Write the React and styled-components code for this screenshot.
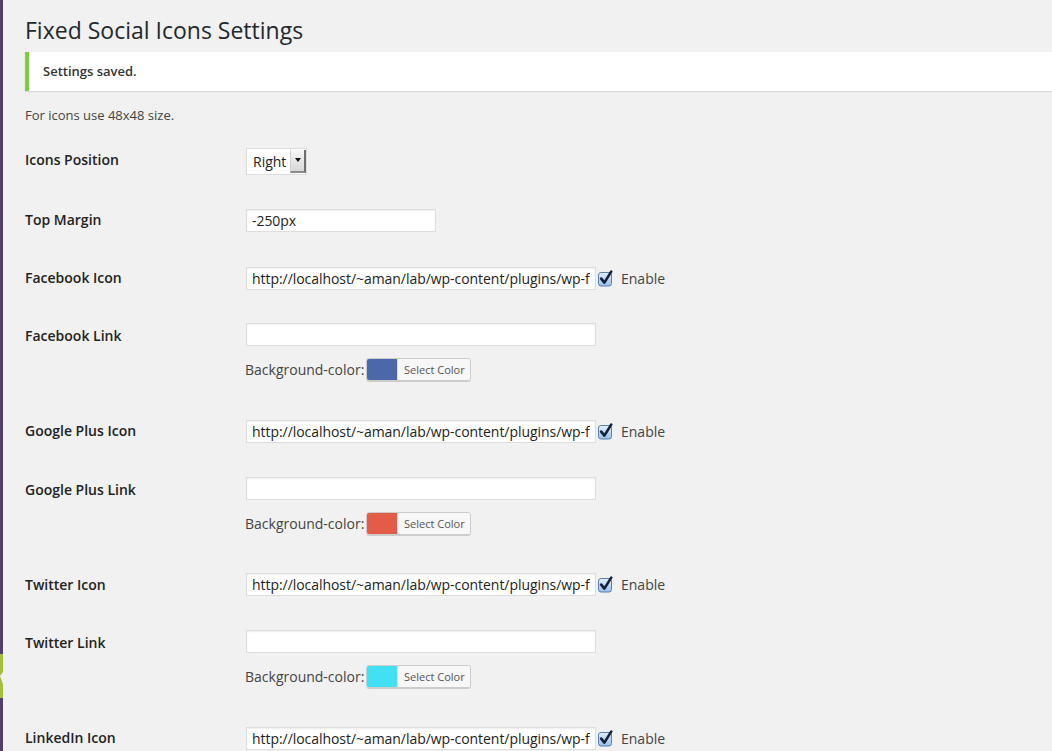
import React from "react";
import styled, { createGlobalStyle } from "styled-components";

const Global = createGlobalStyle`
  html, body { margin: 0; padding: 0; background: #f1f1f1; }
  body { font-family: "Open Sans", "Liberation Sans", sans-serif; color: #444; font-size: 13px; overflow: hidden; }
  * { box-sizing: border-box; }
`;

const Page = styled.div`
  display: flex;
  width: 1052px;
  height: 751px;
  overflow: hidden;
  background: #f1f1f1;
`;

const MenuStrip = styled.div`
  position: relative;
  width: 3px;
  flex: 0 0 3px;
  background: #523f6d;
`;

const CurrentMarker = styled.svg`
  position: absolute;
  left: 0;
  top: 654px;
`;

const Main = styled.div`
  flex: 1;
  padding: 16px 0 0 22px;
  min-width: 0;
`;

const Title = styled.h1`
  margin: 0;
  font-size: 23px;
  line-height: 29px;
  font-weight: 400;
  color: #23282d;
`;

const Notice = styled.div`
  margin-top: 7px;
  background: #fff;
  border-left: 4px solid #7ad03a;
  box-shadow: 0 1px 1px rgba(0, 0, 0, 0.1);
  padding: 10px 14px;
  font-size: 13px;
  line-height: 19px;
  font-weight: 600;
  color: #333;
`;

const Intro = styled.p`
  margin: 15px 0 6px;
  font-size: 13px;
  line-height: 19px;
  color: #444;
`;

const Row = styled.div`
  display: grid;
  grid-template-columns: 221px 1fr;
  height: ${(p) => p.$h}px;
`;

const Label = styled.div`
  padding-top: ${(p) => p.$top}px;
  font-size: 14px;
  line-height: 18px;
  font-weight: 600;
  color: #222;
`;

const Field = styled.div`
  display: flex;
  flex-direction: column;
  justify-content: ${(p) => (p.$center ? "center" : "flex-start")};
  padding-top: ${(p) => p.$top || 0}px;
  gap: 12px;
`;

const Line = styled.div`
  display: flex;
  align-items: center;
`;

const TextInput = styled.input`
  width: ${(p) => p.$w}px;
  height: 23px;
  border: 1px solid #ddd;
  box-shadow: inset 0 1px 2px rgba(0, 0, 0, 0.07);
  background: #fff;
  padding: 0 5px;
  margin: 0;
  font-family: "Open Sans", "Liberation Sans", sans-serif;
  font-size: 14px;
  letter-spacing: -0.05px;
  color: #222;
  outline: none;
`;

const SelectBox = styled.div`
  display: flex;
  align-items: stretch;
  width: 61px;
  height: 27px;
  border: 1px solid #ddd;
  background: #fff;
`;

const SelectValue = styled.span`
  flex: 1;
  padding-left: 6px;
  font-size: 14px;
  line-height: 25px;
  color: #222;
`;

const SelectArrow = styled.span`
  width: 16px;
  margin: 1px 0;
  background: linear-gradient(#f6f6f6, #d8d8d8);
  border-left: 1px solid #cfcfcf;
  border-right: 2px solid #6f6f6f;
  border-bottom: 2px solid #8a8a8a;
  display: flex;
  align-items: center;
  justify-content: center;
  &::after {
    content: "";
    border-left: 3px solid transparent;
    border-right: 3px solid transparent;
    border-top: 4px solid #111;
  }
`;

const Check = styled.span`
  display: inline-flex;
  width: 17px;
  height: 17px;
  margin-left: 2px;
`;

const CheckLabel = styled.span`
  margin-left: 6px;
  font-size: 14px;
  color: #444;
`;

const BgText = styled.span`
  font-size: 14px;
  color: #444;
  margin-left: -1px;
`;

const ColorResult = styled.div`
  display: flex;
  margin-left: 2px;
  height: 23px;
  border: 1px solid #ccc;
  border-radius: 3px;
  overflow: hidden;
  box-shadow: 0 1px 0 #ccc;
`;

const Swatch = styled.span`
  width: 30px;
  background: ${(p) => p.$c};
`;

const SelectColor = styled.span`
  width: 73px;
  background: #f7f7f7;
  border-left: 1px solid #ddd;
  font-size: 11px;
  line-height: 21px;
  color: #555;
  text-align: center;
`;

const URL = "http://localhost/~aman/lab/wp-content/plugins/wp-fixed-social-icons/images/";

function CheckIcon() {
  return (
    <Check>
      <svg width="17" height="17" viewBox="0 0 17 17">
        <defs>
          <linearGradient id="cb" x1="0" y1="0" x2="0" y2="1">
            <stop offset="0" stopColor="#e3f0fd" />
            <stop offset="1" stopColor="#98c0ec" />
          </linearGradient>
        </defs>
        <rect x="0.5" y="2.5" width="13" height="13.5" rx="2.5" fill="url(#cb)" stroke="#5a7fb0" />
        <path d="M3.2 8.6 L6.4 12.6 L13.2 1.6" fill="none" stroke="#14213a" strokeWidth="2.6" strokeLinecap="round" strokeLinejoin="round" />
      </svg>
    </Check>
  );
}

function IconRow({ label }) {
  return (
    <Row $h={58.3}>
      <Label $top={20}>{label}</Label>
      <Field $center>
        <Line>
          <TextInput $w={350} defaultValue={URL} readOnly />
          <CheckIcon />
          <CheckLabel>Enable</CheckLabel>
        </Line>
      </Field>
    </Row>
  );
}

function LinkRow({ label, color }) {
  return (
    <Row $h={95.1}>
      <Label $top={20}>{label}</Label>
      <Field $top={16}>
        <Line>
          <TextInput $w={350} defaultValue="" readOnly />
        </Line>
        <Line>
          <BgText>Background-color:</BgText>
          <ColorResult>
            <Swatch $c={color} />
            <SelectColor>Select Color</SelectColor>
          </ColorResult>
        </Line>
      </Field>
    </Row>
  );
}

export default function App() {
  return (
    <Page>
      <Global />
      <MenuStrip>
        <CurrentMarker width="3" height="44" viewBox="0 0 3 44">
          <rect x="0" y="0" width="3" height="44" fill="#a3bf3a" />
          <path d="M3 18 L0 22 L3 30 Z" fill="#f1f1f1" />
        </CurrentMarker>
      </MenuStrip>
      <Main>
        <Title>Fixed Social Icons Settings</Title>
        <Notice>Settings saved.</Notice>
        <Intro>For icons use 48x48 size.</Intro>
        <Row $h={60}>
          <Label $top={20}>Icons Position</Label>
          <Field $center>
            <Line>
              <SelectBox>
                <SelectValue>Right</SelectValue>
                <SelectArrow />
              </SelectBox>
            </Line>
          </Field>
        </Row>
        <Row $h={58}>
          <Label $top={20}>Top Margin</Label>
          <Field $center>
            <Line>
              <TextInput $w={190} defaultValue="-250px" readOnly />
            </Line>
          </Field>
        </Row>
        <IconRow label="Facebook Icon" />
        <LinkRow label="Facebook Link" color="#4a69a9" />
        <IconRow label="Google Plus Icon" />
        <LinkRow label="Google Plus Link" color="#e25c47" />
        <IconRow label="Twitter Icon" />
        <LinkRow label="Twitter Link" color="#41e0f3" />
        <IconRow label="LinkedIn Icon" />
      </Main>
    </Page>
  );
}
